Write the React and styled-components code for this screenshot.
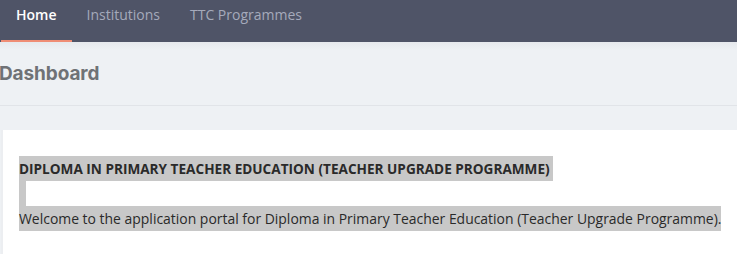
import React from "react";
import styled, { createGlobalStyle } from "styled-components";

const Global = createGlobalStyle`
  html, body { margin: 0; padding: 0; background: #eef1f4; }
  body { width: 737px; height: 254px; overflow: hidden; }
  * { box-sizing: border-box; }
`;

const Page = styled.div`
  display: flex;
  flex-direction: column;
  width: 737px;
  height: 254px;
  overflow: hidden;
  background: #eef1f4;
`;

const NavBar = styled.nav`
  display: flex;
  align-items: stretch;
  height: 42px;
  background: #4f5467;
  font-family: "Open Sans", sans-serif;
  font-size: 14px;
`;

const NavItem = styled.a`
  display: flex;
  align-items: flex-start;
  padding: 5px 15px 0 15px;
  line-height: 20px;
  color: ${(p) => (p.$active ? "#ffffff" : "#a5aabb")};
  font-weight: ${(p) => (p.$active ? 600 : 400)};
  border-bottom: 2px solid ${(p) => (p.$active ? "#ef8d75" : "transparent")};
  margin-left: ${(p) => (p.$first ? "1px" : "0")};
  text-decoration: none;
`;

const Header = styled.header`
  height: 64px;
  display: flex;
  align-items: center;
  background: linear-gradient(#e6e9ed 0px, #eef1f4 8px);
  border-bottom: 1px solid #e1e4e8;
`;

const Title = styled.h1`
  margin: 0 0 0 -1px;
  font-family: "Inter", sans-serif;
  font-weight: 700;
  font-size: 19px;
  color: #6f7276;
  letter-spacing: -0.1px;
`;

const Body = styled.main`
  flex: 1;
  padding-top: 24px;
  padding-left: 1px;
`;

const Card = styled.section`
  background: #ffffff;
  border-left: 2px solid #eceef1;
  height: 100%;
  padding: 26px 0 0 16px;
  font-family: "Open Sans", sans-serif;
  color: #222222;
`;

const Line = styled.div`
  height: 25px;
  line-height: 25px;
  white-space: nowrap;
`;

const Sel = styled.span`
  display: inline-block;
  background: #c8c8c8;
  height: 25px;
  font-size: ${(p) => p.$size || "14px"};
  font-weight: ${(p) => (p.$bold ? 700 : 400)};
  letter-spacing: ${(p) => p.$ls || "0"};
  padding-right: ${(p) => p.$pr || "0"};
  width: ${(p) => p.$w || "auto"};
  color: #2a2a2a;
`;

export default function App() {
  return (
    <>
      <Global />
      <Page>
        <NavBar>
          <NavItem $active $first>Home</NavItem>
          <NavItem>Institutions</NavItem>
          <NavItem>TTC Programmes</NavItem>
        </NavBar>
        <Header>
          <Title>Dashboard</Title>
        </Header>
        <Body>
          <Card>
            <Line>
              <Sel $bold $size="13.6px" $pr="3px">
                DIPLOMA IN PRIMARY TEACHER EDUCATION (TEACHER UPGRADE PROGRAMME)
              </Sel>
            </Line>
            <Line>
              <Sel $w="7px">&nbsp;</Sel>
            </Line>
            <Line>
              <Sel $size="13.95px">
                Welcome to the application portal for Diploma in Primary Teacher Education (Teacher Upgrade Programme).
              </Sel>
            </Line>
          </Card>
        </Body>
      </Page>
    </>
  );
}
